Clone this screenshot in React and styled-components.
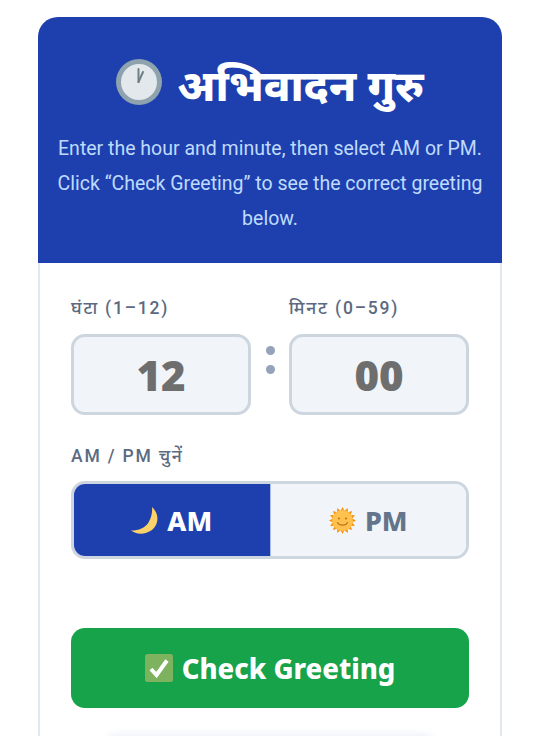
import React, { useState } from 'react';
import styled, { createGlobalStyle } from 'styled-components';

const GlobalStyle = createGlobalStyle`
    html, body {
        margin: 0;
        background: #fff;
    }
    body {
        font-family: Roboto, "Noto Sans", sans-serif;
        overflow: hidden;
    }
    * {
        box-sizing: border-box;
    }
`;

const ClockIcon = () => (
    <svg width="46" height="46" viewBox="0 0 46 46">
        <circle cx="23" cy="23" r="23" fill="#8fa3ae" />
        <circle cx="23" cy="23" r="18" fill="#e3e8ec" />
        <path d="M22.500 10 L22.500 23" stroke="#6f7f88" strokeWidth="2" strokeLinecap="round" />
        <path d="M22.500 23 L27 13" stroke="#6f7f88" strokeWidth="2" strokeLinecap="round" />
    </svg>
);

const MoonIcon = () => (
    <svg width="27" height="27" viewBox="0 0 27 27">
        <path d="M21 0 C28 6 28.500 17 21 23 C14 28 5 27.500 0 23.500 C8 23.500 14 21 17.500 15.500 C20.500 10.500 21.500 5 21 0 Z" fill="#fbd16a" />
    </svg>
);

const SunIcon = () => {
    const rays = Array.from({ length: 16 }, (_, i) => i * 22.5);
    return (
        <svg width="27" height="27" viewBox="0 0 27 27">
            {rays.map((r) => (
                <path key={r} d="M13.500 0 L15.500 4 L11.500 4 Z" fill="#f4900c" transform={`rotate(${r} 13.500 13.500)`} />
            ))}
            <circle cx="13.500" cy="13.500" r="10.500" fill="#ffc14d" />
            <circle cx="10" cy="11.500" r="1.100" fill="#c1741b" />
            <circle cx="17" cy="11.500" r="1.100" fill="#c1741b" />
            <path d="M8.500 15.500 C10 19 17 19 18.500 15.500" fill="none" stroke="#c1741b" strokeWidth="1.100" strokeLinecap="round" />
        </svg>
    );
};

const CheckIcon = () => (
    <svg width="28" height="28" viewBox="0 0 28 28">
        <rect width="28" height="28" rx="2.500" fill="#7db35f" />
        <path d="M6 15 L11.500 21 L22 6.500" fill="none" stroke="#fff" strokeWidth="4" />
    </svg>
);

const App = () => {
    const [period, setPeriod] = useState('AM');

    return (
        <Page>
            <GlobalStyle />
            <Card>
                <Header>
                    <Title>
                        <ClockIcon />
                        <span>अभिवादन गुरु</span>
                    </Title>
                    <Intro>
                        Enter the hour and minute, then select AM or PM. Click “Check Greeting” to see the correct greeting below.
                    </Intro>
                </Header>
                <Body>
                    <TimeRow>
                        <Field>
                            <Label>घंटा (1–12)</Label>
                            <TimeInput defaultValue="12" />
                        </Field>
                        <Colon>
                            <i />
                            <i />
                        </Colon>
                        <Field>
                            <Label>मिनट (0–59)</Label>
                            <TimeInput defaultValue="00" />
                        </Field>
                    </TimeRow>
                    <Label>AM / PM चुनें</Label>
                    <Toggle>
                        <ToggleButton $active={period === 'AM'} onClick={() => setPeriod('AM')}>
                            <MoonIcon /> AM
                        </ToggleButton>
                        <ToggleButton $active={period === 'PM'} onClick={() => setPeriod('PM')}>
                            <SunIcon /> PM
                        </ToggleButton>
                    </Toggle>
                    <CheckButton>
                        <CheckIcon /> Check Greeting
                    </CheckButton>
                    <ResultGlow />
                </Body>
            </Card>
        </Page>
    );
};

export default App;

const Page = styled.div`
    height: 736px;
    padding: 17px 38px 0;
    overflow: hidden;
    background: #fff;
`;

const Card = styled.div`
    width: 464px;
    height: 800px;
    border-radius: 20px 20px 0 0;
    border: 2px solid #e2e8f0;
    border-top: none;
    background: #fff;
`;

const Header = styled.header`
    margin: 0 -2px;
    height: 246px;
    padding: 39px 15px 0;
    border-radius: 20px 20px 0 0;
    background: #1e40af;
    text-align: center;
`;

const Title = styled.h1`
    margin: 0 0 19px;
    display: flex;
    align-items: center;
    justify-content: center;
    gap: 15px;
    height: 56px;
    color: #fff;
    font-family: "Noto Sans", "Noto Sans Devanagari", sans-serif;
    font-size: 43.5px;
    font-weight: 800;
    line-height: 56px;
    white-space: nowrap;

    svg {
        position: relative;
        top: -2px;
    }
`;

const Intro = styled.p`
    margin: 0;
    color: #bfdbfe;
    font-size: 19.5px;
    line-height: 35px;
`;

const Body = styled.div`
    padding: 32px 31px 0;
`;

const TimeRow = styled.div`
    display: flex;
    gap: 14px;
    margin-bottom: 28px;
`;

const Field = styled.div`
    flex: 1;
`;

const Label = styled.label`
    display: block;
    height: 25px;
    margin-bottom: 14px;
    padding-top: 1px;
    color: #5b6a80;
    font-family: Roboto, "Noto Sans", sans-serif;
    font-size: 17.5px;
    font-weight: 500;
    letter-spacing: 1.8px;
    line-height: 25px;
    white-space: nowrap;
`;

const TimeInput = styled.input`
    display: block;
    width: 180px;
    height: 81px;
    border: 3px solid #cdd5df;
    border-radius: 14px;
    background: #f1f5f9;
    color: #6e6e6e;
    font-family: "Noto Sans", sans-serif;
    font-size: 42px;
    font-weight: 900;
    text-align: center;
    outline: none;
`;

const Colon = styled.div`
    flex: none;
    width: 10px;
    padding-top: 51px;
    display: flex;
    flex-direction: column;
    align-items: center;
    gap: 10px;

    i {
        width: 9px;
        height: 9px;
        border-radius: 50%;
        background: #94a3b8;
    }
`;

const Toggle = styled.div`
    display: flex;
    height: 78px;
    margin-top: -1px;
    border: 3px solid #cdd5df;
    border-radius: 14px;
    overflow: hidden;
    background: #f1f5f9;
`;

const ToggleButton = styled.button`
    flex: 1;
    display: flex;
    align-items: center;
    justify-content: center;
    gap: 9px;
    padding: 0;
    border: none;
    border-right: ${(props) => (props.$active ? '1.5px solid #a9bbe4' : 'none')};
    background: ${(props) => (props.$active ? '#1e40af' : '#f1f5f9')};
    color: ${(props) => (props.$active ? '#fff' : '#64748b')};
    font-family: "Noto Sans", sans-serif;
    font-size: 27px;
    font-weight: 800;
    cursor: pointer;
`;

const CheckButton = styled.button`
    width: 100%;
    height: 80px;
    margin-top: 69px;
    display: flex;
    align-items: center;
    justify-content: center;
    gap: 9px;
    border: none;
    border-radius: 14px;
    background: #16a34a;
    color: #fff;
    font-family: "Noto Sans", sans-serif;
    font-size: 27.5px;
    font-weight: 800;
    cursor: pointer;
`;

const ResultGlow = styled.div`
    height: 40px;
    margin: 28px 33px 0;
    border-radius: 14px;
    background: #fff;
    box-shadow: 0 -1px 8px rgba(148, 163, 220, 0.2);
`;
